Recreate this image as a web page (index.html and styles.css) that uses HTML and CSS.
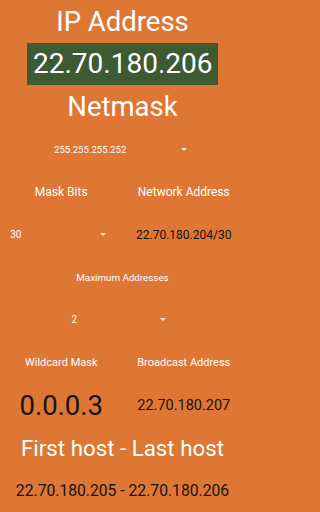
FILE: index.html
```html
<!DOCTYPE html>
<html>
<head>
<meta charset="utf-8">
<link rel="stylesheet" href="styles.css">
</head>
<body>
<main class="screen">
  <div class="row"><h1 class="title">IP Address</h1></div>
  <div class="row"><div class="ip-box">22.70.180.206</div></div>
  <div class="row"><h2 class="title">Netmask</h2></div>
  <div class="row"><div class="spinner spinner-mask"><span class="spin-text">255.255.255.252</span><span class="arrow"></span></div></div>
  <div class="row cols">
    <div class="col label">Mask Bits</div>
    <div class="col label">Network Address</div>
  </div>
  <div class="row cols">
    <div class="col"><div class="spinner spinner-bits"><span class="spin-text">30</span><span class="arrow"></span></div></div>
    <div class="col value">22.70.180.204/30</div>
  </div>
  <div class="row"><div class="label small">Maximum Addresses</div></div>
  <div class="row"><div class="spinner spinner-max"><span class="spin-text">2</span><span class="arrow"></span></div></div>
  <div class="row cols">
    <div class="col label mid">Wildcard Mask</div>
    <div class="col label mid">Broadcast Address</div>
  </div>
  <div class="row cols">
    <div class="col value big">0.0.0.3</div>
    <div class="col value bc">22.70.180.207</div>
  </div>
  <div class="row"><h2 class="title hosts">First host - Last host</h2></div>
  <div class="row"><div class="value range">22.70.180.205 - 22.70.180.206</div></div>
</main>
</body>
</html>
```

FILE: styles.css
```css
html, body {
  margin: 0;
  padding: 0;
  background: #de7634;
}
body {
  font-family: Roboto, "Noto Sans", sans-serif;
  color: #ffffff;
}
.screen {
  display: grid;
  grid-template-rows: repeat(12, 1fr);
  height: 512px;
  width: 245px;
}
.row {
  display: flex;
  align-items: center;
  justify-content: center;
}
.cols {
  display: grid;
  grid-template-columns: 1fr 1fr;
  align-items: center;
}
.col {
  display: flex;
  justify-content: center;
  align-items: center;
}
.title {
  margin: 0;
  font-size: 27.5px;
  font-weight: 400;
  line-height: 1;
}
.hosts {
  font-size: 22.3px;
}
.ip-box {
  background: #3e5a33;
  font-size: 28px;
  line-height: 42px;
  padding: 0 6px;
  width: 179px;
  text-align: center;
}
.spinner {
  display: flex;
  align-items: center;
  justify-content: space-between;
  font-size: 10px;
  box-sizing: border-box;
}
.spinner-mask {
  width: 155px;
  padding: 0 14px 0 8px;
  margin-left: 2px;
  font-size: 9.6px;
}
.spinner-bits {
  width: 118px;
  padding: 0 16px 0 6px;
  margin-left: 4px;
}
.spinner-max {
  width: 118px;
  padding: 0 16px 0 8px;
}
.arrow {
  width: 0;
  height: 0;
  border-left: 3px solid transparent;
  border-right: 3px solid transparent;
  border-top: 3px solid #fbe9dc;
}
.label {
  font-size: 12px;
}
.small {
  font-size: 9.8px;
}
.mid {
  font-size: 11px;
}
.value {
  color: #151515;
  font-size: 12px;
}
.big {
  font-size: 27.5px;
}
.bc {
  font-size: 14.5px;
}
.range {
  font-size: 15.7px;
}
```
